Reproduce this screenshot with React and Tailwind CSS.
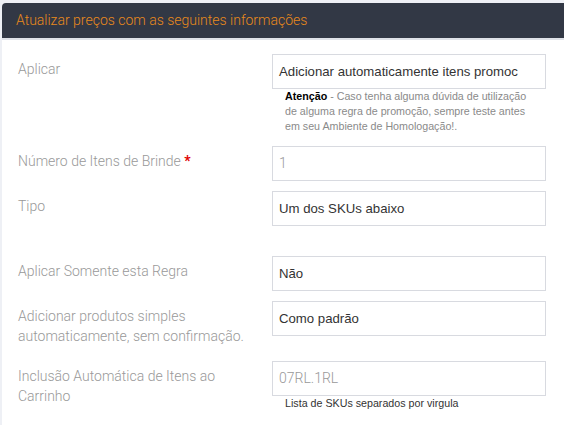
import React from "react";

const labelCls =
  "w-[240px] pt-[5px] text-[14px] leading-[20px] font-light text-[#999999] [font-family:Roboto,'Liberation_Sans',sans-serif]";
const boxCls =
  "w-[274px] h-[35px] ml-[14px] border border-[#d8dae0] bg-white pl-[6px] pr-[6px] flex items-center overflow-hidden whitespace-nowrap";
const selText = "text-[13.2px] text-[#333333] [font-family:'Liberation_Sans',Arial,sans-serif]";
const phText = "text-[14px] font-light text-[#999999] [font-family:Roboto,'Liberation_Sans',sans-serif]";

function Row({ label, children, className = "", help }) {
  return (
    <div className={"flex items-start " + className}>
      <div className={labelCls}>{label}</div>
      <div className="flex flex-col">
        {children}
        {help}
      </div>
    </div>
  );
}

export default function App() {
  return (
    <div className="w-[564px] h-[425px] bg-[#eef0f5] pt-[3px] pl-[2px] overflow-hidden">
      <div className="bg-white h-full rounded-tl-[4px] overflow-hidden">
        <div className="h-[35px] bg-[#323845] flex items-center pl-[14px] border-b-2 border-[#dfe2e8] box-content">
          <span className="text-[14px] font-light text-[#e8891c] [font-family:Roboto,'Liberation_Sans',sans-serif]">
            Atualizar preços com as seguintes informações
          </span>
        </div>
        <div className="pl-[16px] pt-[14px]">
          <Row
            label="Aplicar"
            help={
              <div className="ml-[27px] text-[10.7px] leading-[15px] text-[#8a8a8a] [font-family:'Liberation_Sans',Arial,sans-serif]">
                <b className="text-black">Atenção</b> - Caso tenha alguma dúvida de utilização
                <br />
                de alguma regra de promoção, sempre teste antes
                <br />
                em seu Ambiente de Homologação!.
              </div>
            }
          >
            <div className={boxCls}>
              <span className={selText}>Adicionar automaticamente itens promoc</span>
            </div>
          </Row>
          <Row
            className="mt-[12px]"
            label={
              <>
                Número de Itens de Brinde <span className="text-[#e00000] font-bold">*</span>
              </>
            }
          >
            <div className={boxCls}>
              <span className={phText}>1</span>
            </div>
          </Row>
          <Row className="mt-[10px]" label="Tipo">
            <div className={boxCls}>
              <span className={selText}>Um dos SKUs abaixo</span>
            </div>
          </Row>
          <Row className="mt-[30px]" label="Aplicar Somente esta Regra">
            <div className={boxCls}>
              <span className={selText}>Não</span>
            </div>
          </Row>
          <Row
            className="mt-[10px]"
            label="Adicionar produtos simples automaticamente, sem confirmação."
          >
            <div className={boxCls}>
              <span className={selText}>Como padrão</span>
            </div>
          </Row>
          <Row
            className="mt-[15px]"
            label="Inclusão Automática de Itens ao Carrinho"
            help={
              <div className="ml-[27px] text-[10.7px] leading-[15px] text-[#333333] [font-family:'Liberation_Sans',Arial,sans-serif]">
                Lista de SKUs separados por virgula
              </div>
            }
          >
            <div className={boxCls}>
              <span className={phText}>07RL.1RL</span>
            </div>
          </Row>
        </div>
      </div>
    </div>
  );
}
